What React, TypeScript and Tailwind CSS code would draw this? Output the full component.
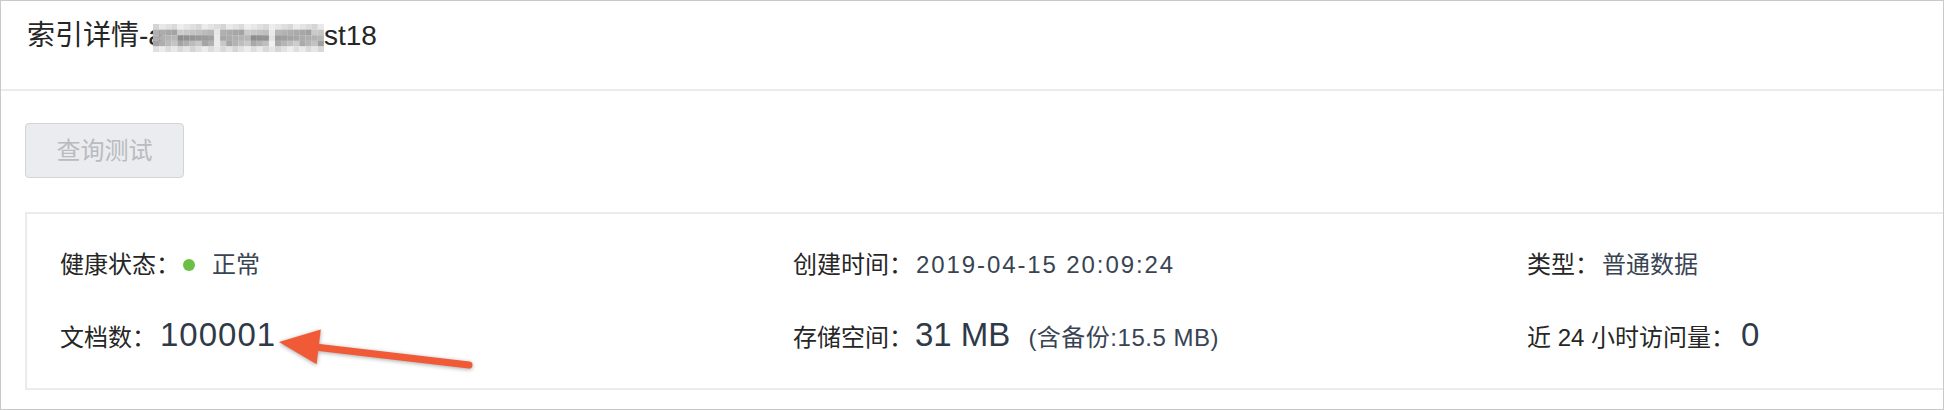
import React from "react";

const mosaicCols = 28;
const mosaicRows = 5;

// pixelated blur over the index name
const mosaicShade = (r: number, c: number) => {
    const h = ((r * 131 + c * 71 + r * c * 17) % 97) / 97;
    const gap = (c === 10 || c === 19) && r > 0 && r < 4;
    if (r === 0 || r === 4) return 212 + Math.round(h * 28);
    if (gap) return 222 + Math.round(h * 20);
    if (r === 2) return 140 + Math.round(h * 45);
    return 160 + Math.round(h * 45);
};

const Mosaic = () => (
    <svg width="171" height="28" viewBox="0 0 171 28" className="ml-[-11px] mt-[4px] shrink-0">
        {Array.from({ length: mosaicRows }).map((_, r) =>
            Array.from({ length: mosaicCols }).map((__, c) => {
                const v = mosaicShade(r, c);
                return (
                    <rect
                        key={`${r}-${c}`}
                        x={c * 6.1}
                        y={r * 5.6}
                        width="6.2"
                        height="5.7"
                        fill={`rgb(${v},${v},${v})`}
                    />
                );
            })
        )}
    </svg>
);

const Arrow = () => (
    <svg
        width="210"
        height="56"
        viewBox="0 0 210 56"
        className="absolute left-[270px] top-[320px] drop-shadow-[0_1px_2px_rgba(0,0,0,0.35)]"
    >
        <line x1="44" y1="26" x2="198" y2="44" stroke="#f15a36" strokeWidth="7" strokeLinecap="round" />
        <polygon points="8,21 49.8,8.4 45.6,43.2" fill="#f15a36" />
    </svg>
);

const Label = ({ children }: { children: React.ReactNode }) => (
    <span className="text-[24px] text-[#262626]">{children}</span>
);

export default function App() {
    return (
        <div className="relative w-[1944px] h-[410px] overflow-hidden border border-[#c9c9c9] bg-white font-['Liberation_Sans','Noto_Sans_CJK_SC',sans-serif]">
            <div className="h-[90px] border-b-2 border-[#ebebeb] pl-[26px] pt-[17px]">
                <div className="flex items-center h-[36px] text-[28px] text-[#262626]">
                    <span>索引详情-a</span>
                    <Mosaic />
                    <span>st18</span>
                </div>
            </div>

            <div className="pl-[24px]">
                <button
                    disabled
                    className="mt-[32px] w-[159px] h-[55px] rounded-[4px] border border-[#d2d4d8] bg-[#ebecef] text-[24px] text-[#b9bbc0]"
                >
                    查询测试
                </button>

                <div className="mt-[34px] w-[2300px] h-[178px] border-2 border-[#ebebeb] pl-[33px] pt-[31px]">
                    <div className="grid grid-cols-[733px_734px_734px] gap-y-[25px]">
                        <div className="flex items-center h-[40px]">
                            <Label>健康状态：</Label>
                            <span className="ml-[3px] w-[12px] h-[12px] rounded-full bg-[#6bbf45]" />
                            <span className="ml-[17px] text-[24px] text-[#394452]">正常</span>
                        </div>
                        <div className="flex items-center h-[40px]">
                            <Label>创建时间：</Label>
                            <span className="ml-[3px] text-[24px] tracking-[1.9px] text-[#394452]">2019-04-15 20:09:24</span>
                        </div>
                        <div className="flex items-center h-[40px]">
                            <Label>类型：</Label>
                            <span className="ml-[3px] text-[24px] text-[#394452]">普通数据</span>
                        </div>

                        <div className="flex items-baseline h-[40px]">
                            <Label>文档数：</Label>
                            <span className="ml-[4px] text-[33px] tracking-[1px] text-[#2f3a48]">100001</span>
                        </div>
                        <div className="flex items-baseline h-[40px]">
                            <Label>存储空间：</Label>
                            <span className="ml-[2px] text-[33px] text-[#2f3a48]">31 MB</span>
                            <span className="ml-[18px] text-[24px] tracking-[0.5px] text-[#394452]">(含备份:15.5 MB)</span>
                        </div>
                        <div className="flex items-baseline h-[40px]">
                            <Label>近 24 小时访问量：</Label>
                            <span className="ml-[6px] text-[33px] text-[#2f3a48]">0</span>
                        </div>
                    </div>
                </div>
            </div>

            <Arrow />
        </div>
    );
}
